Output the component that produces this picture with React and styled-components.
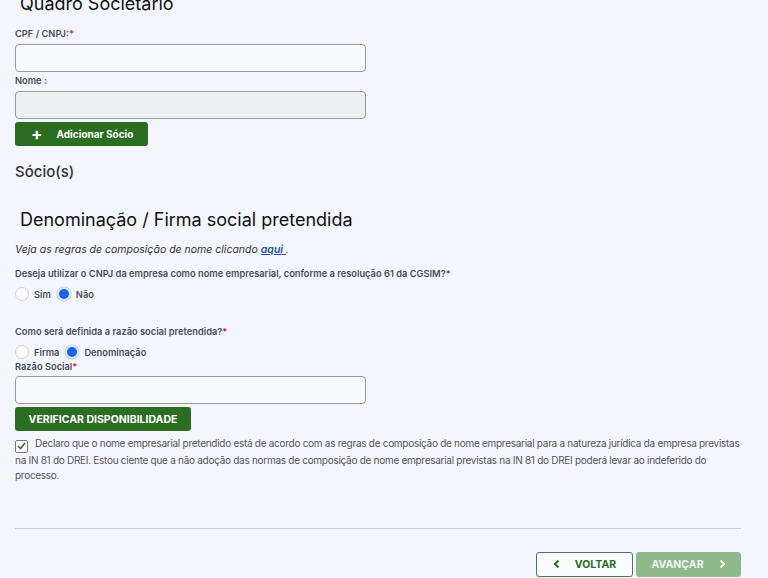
import React from "react";
import styled, { createGlobalStyle } from "styled-components";

const Global = createGlobalStyle`
  html, body { margin: 0; padding: 0; background: #f3f6fd; }
  body { font-family: Inter, "Noto Sans", sans-serif; color: #333; }
  * { box-sizing: border-box; }
`;

const Page = styled.div`
  width: 768px;
  height: 578px;
  overflow: hidden;
  padding: 0 27px 0 15px;
  display: flex;
  flex-direction: column;
  align-items: flex-start;
`;

const SectionTitle = styled.h2`
  margin: ${(p) => p.$mt || "0"} 0 0 5px;
  font-size: 18px;
  line-height: 24px;
  font-weight: 400;
  color: #111;
  white-space: nowrap;
`;

const SubTitle = styled.h3`
  margin: ${(p) => p.$mt || "0"} 0 0 0;
  font-size: 15px;
  line-height: 20px;
  font-weight: 500;
  color: #333;
`;

const Label = styled.label`
  display: block;
  margin-top: ${(p) => p.$mt || "0"};
  font-size: 9.3px;
  line-height: 14px;
  font-weight: 600;
  color: #4a4e57;
  white-space: nowrap;
`;

const Req = styled.span`
  color: #e0242c;
`;

const Input = styled.input`
  display: block;
  flex: none;
  width: 351px;
  height: 28px;
  min-height: 28px;
  padding: 0 8px;
  margin: ${(p) => p.$mt || "0"} 0 0 0;
  border: 1px solid #9a9a9a;
  border-radius: 4px;
  background: ${(p) => (p.disabled ? "#eeeff1" : "#f8faff")};
  outline: none;
`;

const GreenButton = styled.button`
  display: flex;
  flex: none;
  align-items: center;
  justify-content: ${(p) => p.$justify || "center"};
  height: 24px;
  margin-top: ${(p) => p.$mt || "0"};
  padding: 0 ${(p) => p.$px || "0"};
  width: ${(p) => p.$w || "auto"};
  border: none;
  border-radius: 3px;
  background: #2b6d21;
  color: #fff;
  font-family: Inter, sans-serif;
  font-size: ${(p) => p.$fs || "10px"};
  font-weight: 700;
  white-space: nowrap;
  cursor: pointer;
`;

const Plus = styled.span`
  font-size: 17px;
  font-weight: 700;
  line-height: 1;
  margin-right: 14px;
`;

const Hint = styled.p`
  margin: 10px 0 0;
  font-size: 10.5px;
  line-height: 16px;
  font-style: italic;
  color: #333;
`;

const Link = styled.a`
  color: #1c4f9c;
  font-weight: 600;
  text-decoration: underline;
`;

const RadioRow = styled.div`
  display: flex;
  align-items: center;
  height: 16px;
  margin-top: 5px;
`;

const RadioOpt = styled.span`
  display: flex;
  align-items: center;
  gap: 5px;
  margin-right: 6px;
  font-size: 9.3px;
  font-weight: 600;
  color: #4a4e57;
`;

const Circle = styled.span`
  width: 14px;
  height: 14px;
  border-radius: 50%;
  border: ${(p) => (p.$on ? "2px solid #dbe6fb" : "1px solid #cfd3da")};
  background: ${(p) => (p.$on ? "#1b64e3" : "#fbfcff")};
  box-shadow: ${(p) => (p.$on ? "0 0 0 0.5px #b8c9ea" : "none")};
`;

const CheckRow = styled.div`
  margin-top: 5px;
  width: 100%;
  font-size: 10px;
  letter-spacing: -0.28px;
  line-height: 15px;
  color: #555;
  white-space: nowrap;
`;

const Box = styled.span`
  display: inline-flex;
  align-items: center;
  justify-content: center;
  vertical-align: -3px;
  width: 13px;
  height: 13px;
  margin-right: 7px;
  border: 1px solid #777;
  border-radius: 2px;
  background: #fff;
`;

const Divider = styled.hr`
  align-self: stretch;
  margin: 45px 0 0;
  border: none;
  border-top: 1px solid #cdd0d6;
`;

const Footer = styled.div`
  align-self: stretch;
  display: flex;
  justify-content: flex-end;
  gap: 3px;
  margin-top: 23px;
`;

const NavButton = styled.button`
  display: flex;
  align-items: center;
  justify-content: center;
  gap: 14px;
  height: 25px;
  width: ${(p) => p.$w};
  border-radius: 3px;
  border: 1px solid ${(p) => (p.$primary ? "#8fb98b" : "#4d7a4a")};
  background: ${(p) => (p.$primary ? "#8fb98b" : "#fbfcff")};
  color: ${(p) => (p.$primary ? "#eef5ee" : "#2b6d21")};
  font-family: Inter, sans-serif;
  font-size: 10.5px;
  font-weight: 700;
`;

const Chevron = ({ dir }) => (
  <svg width="8" height="10" viewBox="0 0 8 10">
    <path
      d={dir === "left" ? "M5.5 1.5 L2 5 L5.5 8.5" : "M2.5 1.5 L6 5 L2.5 8.5"}
      fill="none"
      stroke="currentColor"
      strokeWidth="2"
    />
  </svg>
);

export default function App() {
  return (
    <>
      <Global />
      <Page>
        <SectionTitle $mt="-8px">Quadro Societário</SectionTitle>
        <Label $mt="11px">
          CPF / CNPJ:<Req>*</Req>
        </Label>
        <Input $mt="3px" />
        <Label $mt="2px">Nome :</Label>
        <Input $mt="3px" disabled />
        <GreenButton $mt="3px" $w="133px" $px="16px" $justify="flex-start">
          <Plus>+</Plus>Adicionar Sócio
        </GreenButton>
        <SubTitle $mt="16px">Sócio(s)</SubTitle>
        <SectionTitle $mt="26px">Denominação / Firma social pretendida</SectionTitle>
        <Hint>
          Veja as regras de composição de nome clicando <Link href="#">aqui </Link>.
        </Hint>
        <Label $mt="9px">
          Deseja utilizar o CNPJ da empresa como nome empresarial, conforme a resolução 61 da CGSIM?<Req>*</Req>
        </Label>
        <RadioRow>
          <RadioOpt>
            <Circle />
            Sim
          </RadioOpt>
          <RadioOpt>
            <Circle $on />
            Não
          </RadioOpt>
        </RadioRow>
        <Label $mt="23px">
          Como será definida a razão social pretendida?<Req>*</Req>
        </Label>
        <RadioRow>
          <RadioOpt>
            <Circle />
            Firma
          </RadioOpt>
          <RadioOpt>
            <Circle $on />
            Denominação
          </RadioOpt>
        </RadioRow>
        <Label $mt="0px">
          Razão Social<Req>*</Req>
        </Label>
        <Input $mt="2px" />
        <GreenButton $mt="3px" $w="176px" $fs="10.5px">
          VERIFICAR DISPONIBILIDADE
        </GreenButton>
        <CheckRow>
          <Box>
            <svg width="9" height="8" viewBox="0 0 9 8">
              <path d="M1 4 L3.5 6.5 L8 1" fill="none" stroke="#2b6d21" strokeWidth="1.6" />
            </svg>
          </Box>
          Declaro que o nome empresarial pretendido está de acordo com as regras de composição de nome empresarial para a natureza jurídica da empresa previstas
          <br />
          na IN 81 do DREI. Estou ciente que a não adoção das normas de composição de nome empresarial previstas na IN 81 do DREI poderá levar ao indeferido do
          <br />
          processo.
        </CheckRow>
        <Divider />
        <Footer>
          <NavButton $w="97px">
            <Chevron dir="left" />
            VOLTAR
          </NavButton>
          <NavButton $w="105px" $primary>
            AVANÇAR
            <Chevron dir="right" />
          </NavButton>
        </Footer>
      </Page>
    </>
  );
}
